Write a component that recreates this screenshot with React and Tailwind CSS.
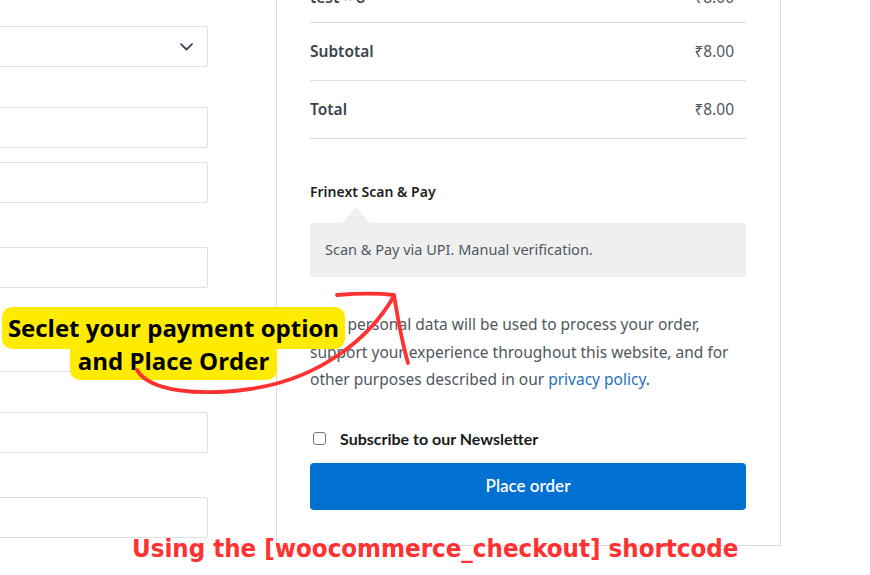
import React from "react";

const sans = { fontFamily: '"Noto Sans", "Open Sans", sans-serif' };

function Input({ className = "", children }) {
  return (
    <div className={"h-[41px] w-full border border-[#dcdfe4] rounded-[2px] bg-white flex items-center justify-end pr-[14px] " + className}>
      {children}
    </div>
  );
}

export default function App() {
  return (
    <div className="relative w-[870px] h-[575px] overflow-hidden bg-white flex items-start" style={sans}>
      {/* left column */}
      <div className="-ml-[100px] w-[308px] pt-[26px] flex flex-col shrink-0">
        <Input>
          <svg width="13" height="8" viewBox="0 0 13 8" fill="none">
            <path d="M1 1.2 L6.5 6.5 L12 1.2" stroke="#3a4656" strokeWidth="1.8" strokeLinecap="round" strokeLinejoin="round" />
          </svg>
        </Input>
        <Input className="mt-[40px]" />
        <Input className="mt-[14px]" />
        <Input className="mt-[44px]" />
        <Input className="mt-[43px]" />
        <Input className="mt-[40px]" />
        <Input className="mt-[44px]" />
      </div>

      {/* right panel */}
      <div className="ml-[68px] -mt-[36px] w-[505px] shrink-0 border border-[#d9dce1] pl-[33px] pr-[34px] pb-[35px] flex flex-col">
        <div className="h-[58px] pt-[9px] border-b border-[#dcdde0] flex items-center justify-between pr-[12px] text-[15.5px]">
          <span className="font-semibold text-[#3c434a]">test × 8</span>
          <span className="text-[#50575e]">₹8.00</span>
        </div>
        <div className="h-[58px] border-b border-[#dcdde0] flex items-center justify-between pr-[12px] text-[15.5px]">
          <span className="font-semibold text-[#3c434a]">Subtotal</span>
          <span className="text-[#50575e]">₹8.00</span>
        </div>
        <div className="h-[58px] border-b border-[#dcdde0] flex items-center justify-between pr-[12px] text-[15.5px]">
          <span className="font-semibold text-[#3c434a]">Total</span>
          <span className="text-[#50575e]">₹8.00</span>
        </div>

        <div className="mt-[43px] h-[20px] leading-[20px] text-[14px] font-semibold text-[#1e1e1e]">Frinext Scan &amp; Pay</div>
        <div className="mt-[5px] ml-[32px] w-0 h-0 border-l-[14px] border-r-[14px] border-b-[16px] border-l-transparent border-r-transparent border-b-[#efefef]" />
        <div className="h-[54px] bg-[#efefef] flex items-center pl-[15px] text-[14.5px] text-[#50575e]">
          Scan &amp; Pay via UPI. Manual verification.
        </div>

        <p className="mt-[34px] text-[15.5px] leading-[27.5px] text-[#50575e] whitespace-nowrap">
          Your personal data will be used to process your order,<br />
          support your experience throughout this website, and for<br />
          other purposes described in our <span className="text-[#1e73be]">privacy policy</span>.
        </p>

        <label className="mt-[35px] h-[20px] flex items-center">
          <span className="ml-[3px] w-[13px] h-[13px] border border-[#767676] rounded-[3px] bg-white" />
          <span className="ml-[14px] text-[16px] font-bold text-[#1a1a1a]" style={{ fontFamily: 'Lato, "Noto Sans", sans-serif' }}>
            Subscribe to our Newsletter
          </span>
        </label>

        <button
          className="mt-[14px] h-[47px] w-full rounded-[4px] bg-[#0170d3] text-white text-[17px] font-semibold"
          style={{ fontFamily: 'Lato, "Noto Sans", sans-serif' }}
        >
          Place order
        </button>
      </div>

      {/* annotation: callout */}
      <div className="absolute left-[2px] top-[307px] flex flex-col items-start" style={{ fontFamily: '"Open Sans", Lato, sans-serif' }}>
        <div className="h-[42px] w-[343px] bg-[#ffeb00] rounded-[10px] flex items-center justify-center text-[24px] font-bold text-black">
          Seclet your payment option
        </div>
        <div className="-mt-[2px] ml-[68px] h-[33px] w-[207px] bg-[#ffeb00] rounded-b-[10px] flex items-start justify-center text-[24px] leading-[28px] font-bold text-black">
          and Place Order
        </div>
      </div>

      {/* annotation: arrow */}
      <svg className="absolute left-0 top-0 pointer-events-none" width="870" height="575" viewBox="0 0 870 575" fill="none">
        <path d="M137 370 C 150 392 200 396 250 389 C 320 379 370 338 394 296" stroke="#ff3131" strokeWidth="3.8" strokeLinecap="round" />
        <path d="M337 295 C 360 293 378 293 394 295 C 398 320 402 342 408 363" stroke="#ff3131" strokeWidth="3.8" strokeLinecap="round" strokeLinejoin="round" />
      </svg>

      {/* annotation: caption */}
      <div
        className="absolute left-[132px] top-[531px] text-[25.6px] leading-[34px] font-bold text-[#ff3131] whitespace-nowrap"
        style={{ fontFamily: '"DejaVu Sans Condensed", "DejaVu Sans", sans-serif', fontStretch: "condensed" }}
      >
        Using the [woocommerce_checkout] shortcode
      </div>
    </div>
  );
}
